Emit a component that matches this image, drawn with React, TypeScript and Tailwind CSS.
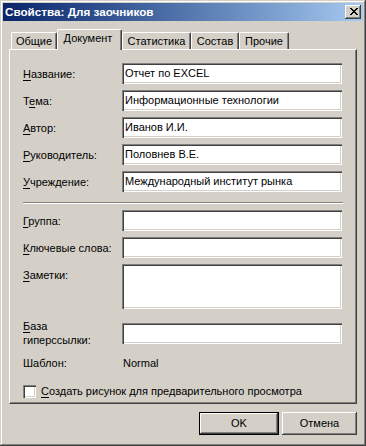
import type { ReactNode } from "react";

const raised =
  "shadow-[inset_-1px_-1px_0_#404040,inset_1px_1px_0_#ffffff,inset_-2px_-2px_0_#808080]";
const sunken =
  "shadow-[inset_1px_1px_0_#808080,inset_2px_2px_0_#404040,inset_-1px_-1px_0_#ffffff,inset_-2px_-2px_0_#d4d0c8]";

function CloseGlyph() {
  // pixel X from the classic caption button
  const px: [number, number][] = [
    [0, 0], [1, 0], [6, 0], [7, 0],
    [1, 1], [2, 1], [5, 1], [6, 1],
    [2, 2], [3, 2], [4, 2], [5, 2],
    [3, 3], [4, 3],
    [2, 4], [3, 4], [4, 4], [5, 4],
    [1, 5], [2, 5], [5, 5], [6, 5],
    [0, 6], [1, 6], [6, 6], [7, 6],
  ];
  return (
    <svg width="8" height="7" viewBox="0 0 8 7" shapeRendering="crispEdges">
      {px.map(([x, y]) => (
        <rect key={`${x}-${y}`} x={x} y={y} width="1" height="1" fill="#000" />
      ))}
    </svg>
  );
}

function Tab({ label, width, active }: { label: string; width: number; active?: boolean }) {
  return (
    <div
      style={{ width }}
      className={
        active
          ? "relative z-10 h-[21px] mb-[-1px] bg-[#d4d0c8] border-t border-l border-white border-r border-r-[#404040] rounded-t-[2px] shadow-[inset_-1px_0_0_#808080] flex justify-center pt-[2px] pr-[3px] leading-[13px]"
          : "h-[17px] border-t border-l border-white border-r border-r-[#404040] rounded-t-[2px] shadow-[inset_-1px_0_0_#808080] flex justify-center pt-[2px] leading-[13px]"
      }
    >
      {label}
    </div>
  );
}

function Field({ value, tall }: { value?: string; tall?: boolean }) {
  return (
    <div
      className={`w-[220px] ${tall ? "h-[45px]" : "h-[21px]"} bg-white ${sunken} pl-[3px] leading-[21px] whitespace-nowrap overflow-hidden`}
    >
      {value}
    </div>
  );
}

function Row({ label, value }: { label: ReactNode; value?: string }) {
  return (
    <div className="flex items-center">
      <div className="w-[99px] leading-[14px]">{label}</div>
      <Field value={value} />
    </div>
  );
}

function Key({ children }: { children: ReactNode }) {
  return <span className="underline underline-offset-[2px]">{children}</span>;
}

export default function App() {
  return (
    <div className="w-[366px] h-[446px] bg-[#d4d0c8] p-[3px] flex flex-col text-[11px] text-black font-['Liberation_Sans',Arial,sans-serif] select-none shadow-[inset_-1px_-1px_0_#404040,inset_1px_1px_0_#d4d0c8,inset_-2px_-2px_0_#808080,inset_2px_2px_0_#ffffff]">
      <div className="h-[18px] flex items-center justify-between pl-[2px] pr-[2px] bg-linear-to-r from-[#0a246a] to-[#a6caf0]">
        <span className="font-bold text-white text-[11.7px] leading-[18px]">Свойства: Для заочников</span>
        <div className={`w-[16px] h-[14px] bg-[#d4d0c8] ${raised} flex items-center justify-center pl-[1px] pb-[1px]`}>
          <CloseGlyph />
        </div>
      </div>

      <div className="mt-[8px] h-[20px] flex items-end pl-[8px]">
        <Tab label="Общие" width={46} />
        <Tab label="Документ" width={65} active />
        <Tab label="Статистика" width={69} />
        <Tab label="Состав" width={48} />
        <Tab label="Прочие" width={50} />
      </div>

      <div className="ml-[6px] w-[348px] h-[355px] border-l border-t border-white border-r border-b border-r-[#404040] border-b-[#404040] shadow-[inset_-1px_-1px_0_#808080] pl-[13px] pt-[13px]">
        <div className="flex flex-col gap-[6px]">
          <Row label={<><Key>Н</Key>азвание:</>} value="Отчет по EXCEL" />
          <Row label={<>Т<Key>е</Key>ма:</>} value="Информационные технологии" />
          <Row label={<><Key>А</Key>втор:</>} value="Иванов И.И." />
          <Row label={<><Key>Р</Key>уководитель:</>} value="Половнев В.Е." />
          <Row label={<><Key>У</Key>чреждение:</>} value="Международный институт рынка" />
        </div>

        <div className="mt-[10px] w-[320px] h-[2px] border-t border-[#808080] border-b border-b-white" />

        <div className="mt-[6px] flex flex-col gap-[6px]">
          <Row label={<><Key>Г</Key>руппа:</>} />
          <Row label={<><Key>К</Key>лючевые слова:</>} />
          <div className="flex items-start">
            <div className="w-[99px] leading-[14px] pt-[4px]">
              <Key>З</Key>аметки:
            </div>
            <Field tall />
          </div>
        </div>

        <div className="mt-[10px]">
          <Row label={<><Key>Б</Key>аза<br />гиперссылки:</>} />
        </div>

        <div className="mt-[9px] flex leading-[14px]">
          <div className="w-[99px]">Шаблон:</div>
          <div className="pl-[1px]">Normal</div>
        </div>

        <div className="mt-[14px] flex items-center leading-[14px]">
          <div className={`w-[13px] h-[13px] bg-white ${sunken}`} />
          <span className="ml-[5px]">
            <Key>С</Key>оздать рисунок для предварительного просмотра
          </span>
        </div>
      </div>

      <div className="mt-[8px] flex justify-end gap-[3px] pr-[6px]">
        <div className={`w-[80px] h-[23px] border border-black ${raised} flex items-center justify-center`}>
          OK
        </div>
        <div className={`w-[75px] h-[23px] ${raised} flex items-center justify-center`}>
          Отмена
        </div>
      </div>
    </div>
  );
}
